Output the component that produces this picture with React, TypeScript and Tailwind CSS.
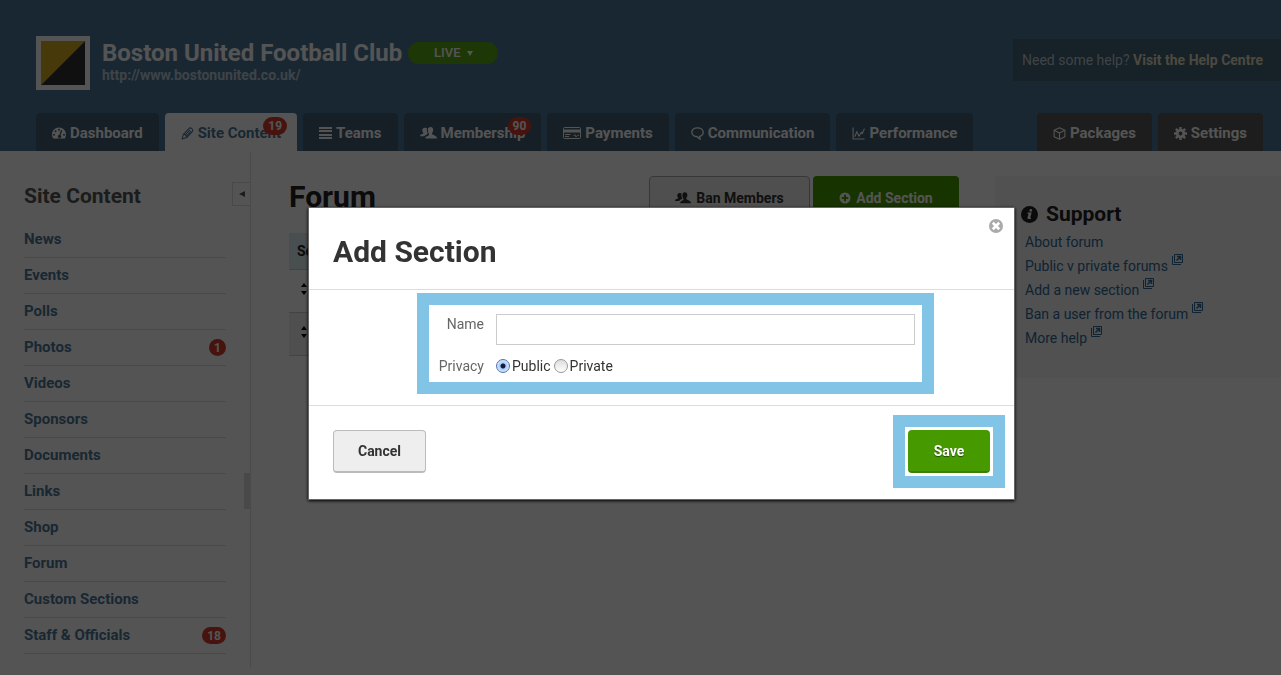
import React, { useState } from 'react';

interface IconProps {
  className?: string;
}

const DashboardIcon: React.FC<IconProps> = ({ className }) => (
  <svg viewBox="0 0 28 24" fill="currentColor" fillRule="evenodd" className={className}>
    <path d="M14 1C6.300 1 0 7.300 0 15c0 2.700.8 5.200 2.100 7.300.2.400.5.700 1 .7h21.800c.5 0 .8-.3 1-.7A13.700 13.700 0 0 0 28 15C28 7.300 21.700 1 14 1ZM4 17.500a2 2 0 1 1 0-4 2 2 0 0 1 0 4ZM7 10.500a2 2 0 1 1 0-4 2 2 0 0 1 0 4ZM14 7.500a2 2 0 1 1 0-4 2 2 0 0 1 0 4ZM24 17.500a2 2 0 1 1 0-4 2 2 0 0 1 0 4ZM19.400 6.300c.7.200 1.100.9.900 1.600l-3.100 8.300a3.300 3.300 0 1 1-2.300-.7l2.700-8.400c.2-.7 1.100-1 1.800-.8Z" />
  </svg>
);

const PencilIcon: React.FC<IconProps> = ({ className }) => (
  <svg viewBox="0 0 24 24" fill="none" stroke="currentColor" strokeWidth="2" strokeLinejoin="round" className={className}>
    <path d="M2 22 4.500 13.500 14 3.500a3.500 3.500 0 0 1 6.500 5.500L10.500 19.500 2 22Z" />
    <path d="m8 14.500 8.500-9M10.500 16.500l8.500-9M4.500 13.500c3 0 5.500 2.500 6 6" />
  </svg>
);

const ListIcon: React.FC<IconProps> = ({ className }) => (
  <svg viewBox="0 0 13 12" fill="currentColor" className={className}>
    <path d="M0 0h13v2H0zM0 3h13v2H0zM0 7h13v2H0zM0 10h13v2H0z" />
  </svg>
);

const UsersIcon: React.FC<IconProps> = ({ className }) => (
  <svg viewBox="0 0 34 24" fill="currentColor" className={className}>
    <path d="M21 0c3.600 0 5.300 2.600 5.300 5.800 0 2.700-.9 4.800-2.300 6.100-.5.600-.4 2 .3 2.500 2 1.600 8.300 3 9.200 6 .3 1 .4 2.100.4 2.800H11c0-2 .3-3.300 1.600-4 2-1.200 4.800-1.800 5.400-3.300.5-1 .2-2.300-.4-3.100a9 9 0 0 1-1.900-7C15.700 2.400 17.400 0 21 0Z" />
    <path d="M9.500 1.500c2-.3 3.500.1 4.500 1-.9 3.500-.4 7.500 1.600 10.500-.8 2-5.600 2.500-6.900 5.500H0c0-2 .8-3 2.300-3.600 1.700-.7 4-1 4.500-2.200.3-.7-.1-1.300-.6-1.900C3.300 7 4.500 2.200 9.500 1.500Z" />
  </svg>
);

const CardIcon: React.FC<IconProps> = ({ className }) => (
  <svg viewBox="0 0 36 24" className={className}>
    <rect x="1" y="1" width="34" height="22" rx="2" fill="none" stroke="currentColor" strokeWidth="2" />
    <path d="M1 5h34v6H1z" fill="currentColor" />
    <path d="M4 15h11M4 19h8M21 18c2-3 5-3 4 0s3 1 4-1 3 0 3 1" fill="none" stroke="currentColor" strokeWidth="2" />
  </svg>
);

const CommentIcon: React.FC<IconProps> = ({ className }) => (
  <svg viewBox="0 0 24 24" fill="none" stroke="currentColor" strokeWidth="2.500" strokeLinejoin="round" className={className}>
    <path d="M16 17.500c4-1.200 6.500-4.200 6.500-7.700C22.500 5 18 1.500 12 1.500S1.500 5 1.500 9.800c0 4.700 4.500 8.200 10.500 8.200 1 1.800 2.500 3.500 5 4.500-.8-1.500-1.200-3-1-5Z" />
  </svg>
);

const ChartIcon: React.FC<IconProps> = ({ className }) => (
  <svg viewBox="0 0 24 24" fill="none" stroke="currentColor" strokeWidth="2" className={className}>
    <path d="M2 1v21h21" />
    <path d="m5 18 4-9 4 8 4-7 2 2 4-9" />
  </svg>
);

const BoxIcon: React.FC<IconProps> = ({ className }) => (
  <svg viewBox="0 0 24 24" fill="none" stroke="currentColor" strokeWidth="2" strokeLinejoin="round" className={className}>
    <path d="m12 1.500 10 4.500v12l-10 4.500L2 18V6l10-4.500Z" />
    <path d="m2 6 10 5 10-5M12 11v11.500" />
  </svg>
);

const GearIcon: React.FC<IconProps> = ({ className }) => (
  <svg viewBox="0 0 24 24" className={className}>
    <circle cx="12" cy="12" r="6" fill="none" stroke="currentColor" strokeWidth="5" />
    <path
      d="M12 0v5M12 19v5M0 12h5M19 12h5M3.500 3.500 7 7M17 17l3.500 3.500M3.500 20.500 7 17M17 7l3.500-3.500"
      stroke="currentColor"
      strokeWidth="4.500"
    />
  </svg>
);

const PlusCircleIcon: React.FC<IconProps> = ({ className }) => (
  <svg viewBox="0 0 24 24" fill="currentColor" fillRule="evenodd" className={className}>
    <path d="M12 1a11 11 0 1 0 0 22 11 11 0 0 0 0-22ZM10 5.500h4V10h4.500v4H14v4.500h-4V14H5.500v-4H10V5.500Z" />
  </svg>
);

const CloseIcon: React.FC<IconProps> = ({ className }) => (
  <svg viewBox="0 0 24 24" className={className}>
    <circle cx="12" cy="12" r="12" fill="currentColor" />
    <path d="m6.500 6.500 11 11M17.500 6.500l-11 11" stroke="#fff" strokeWidth="4.500" />
  </svg>
);

const InfoIcon: React.FC<IconProps> = ({ className }) => (
  <svg viewBox="0 0 24 24" className={className}>
    <circle cx="12" cy="12" r="12" fill="currentColor" />
    <circle cx="13.800" cy="6.300" r="1.900" fill="#fff" />
    <path d="M9.300 10.300h4.500l-2 7.200h2.200" fill="none" stroke="#fff" strokeWidth="2" />
    <path d="m12.300 10-2.200 8" stroke="#fff" strokeWidth="2.500" />
  </svg>
);

const ExternalIcon: React.FC<IconProps> = ({ className }) => (
  <svg viewBox="0 0 11 11" fill="none" stroke="currentColor" className={className}>
    <path d="M2.500.5h8v8h-8zM.5 2v8.500H9" />
    <path d="m4.500 6.500 3.500-3.500M5 2.500h3.500V6" strokeWidth="1.500" />
  </svg>
);

const SortIcon: React.FC<IconProps> = ({ className }) => (
  <svg viewBox="0 0 6 12" fill="currentColor" className={className}>
    <path d="m3 0 3 4H0zM3 12 0 8h6z" />
  </svg>
);

interface Tab {
  label: string;
  icon: React.ReactNode;
  badge?: number;
}

const mainTabs: Tab[] = [
  { label: 'Dashboard', icon: <DashboardIcon className="w-[14px] h-3" /> },
  { label: 'Site Content', icon: <PencilIcon className="w-[13px] h-[13px]" />, badge: 19 },
  { label: 'Teams', icon: <ListIcon className="w-[13px] h-3" /> },
  { label: 'Membership', icon: <UsersIcon className="w-[17px] h-3" />, badge: 90 },
  { label: 'Payments', icon: <CardIcon className="w-[18px] h-3" /> },
  { label: 'Communication', icon: <CommentIcon className="w-[13px] h-[13px]" /> },
  { label: 'Performance', icon: <ChartIcon className="w-[13px] h-[13px]" /> },
];

const adminTabs: Tab[] = [
  { label: 'Packages', icon: <BoxIcon className="w-[13px] h-[13px]" /> },
  { label: 'Settings', icon: <GearIcon className="w-[13px] h-[13px]" /> },
];

const sections = [
  { label: 'News' },
  { label: 'Events' },
  { label: 'Polls' },
  { label: 'Photos', badge: 1 },
  { label: 'Videos' },
  { label: 'Sponsors' },
  { label: 'Documents' },
  { label: 'Links' },
  { label: 'Shop' },
  { label: 'Forum' },
  { label: 'Custom Sections' },
  { label: 'Staff & Officials', badge: 18 },
];

const supportLinks = [
  { label: 'About forum', external: false },
  { label: 'Public v private forums', external: true },
  { label: 'Add a new section', external: true },
  { label: 'Ban a user from the forum', external: true },
  { label: 'More help', external: true },
];

const Header = () => (
  <header className="bg-[#4e7899] text-white">
    <div className="flex items-start justify-between pl-9 pt-9 h-[113px]">
      <div className="flex items-start gap-3">
        <svg viewBox="0 0 54 54" className="w-[54px] h-[54px]">
          <path d="M0 0h54v54H0z" fill="#fff" />
          <path d="M5 5h44L5 49z" fill="#d9ae24" />
          <path d="M49 5v44H5z" fill="#333" />
        </svg>
        <div className="pt-[3px]">
          <div className="flex items-center gap-[6px] h-7">
            <h1 className="text-2xl leading-7 font-bold">Boston United Football Club</h1>
            <button className="flex items-center justify-center gap-[6px] w-[90px] h-[22px] rounded-full bg-[#5aa615] text-[13px] font-medium">
              LIVE
              <svg viewBox="0 0 6 5" fill="currentColor" className="w-[6px] h-[5px]">
                <path d="M0 0h6L3 5z" />
              </svg>
            </button>
          </div>
          <a href="#" className="block text-sm leading-4 font-bold text-[#bccbd7]">http://www.bostonunited.co.uk/</a>
        </div>
      </div>
      <p className="mt-[3px] h-[42px] pl-[9px] pr-[18px] leading-[42px] text-sm bg-[#456579] text-[#c0ccd4]">
        Need some help? <a href="#" className="font-bold text-[#e6dcc0]">Visit the Help Centre</a>
      </p>
    </div>
    <nav className="flex justify-between pl-9 pr-[18px]">
      <div className="flex gap-[6px]">
        {mainTabs.map((tab) => (
          <a
            key={tab.label}
            href="#"
            className={`relative flex items-center gap-1 h-[38px] px-4 pt-[2px] rounded-t-sm text-[15px] font-bold ${
              tab.label === 'Site Content' ? 'bg-white text-[#4e7899]' : 'bg-[#446075] text-white'
            }`}
          >
            {tab.icon}
            {tab.label}
            {tab.badge && (
              <span className="absolute top-1 right-[10px] px-[5px] h-[18px] leading-[18px] rounded-full bg-[#d83a30] text-white text-xs">
                {tab.badge}
              </span>
            )}
          </a>
        ))}
      </div>
      <div className="flex gap-[6px]">
        {adminTabs.map((tab) => (
          <a
            key={tab.label}
            href="#"
            className="flex items-center gap-1 h-[38px] px-4 pt-[2px] rounded-t-sm bg-[#585858] text-white text-[15px] font-bold"
          >
            {tab.icon}
            {tab.label}
          </a>
        ))}
      </div>
    </nav>
  </header>
);

const Sidebar = () => (
  <aside className="relative w-[251px] shrink-0 px-6 pt-7 pb-[14px] border-r border-[#e0e0e0]">
    <h2 className="text-[21px] leading-8 font-bold text-[#555]">Site Content</h2>
    <button className="absolute top-[30px] right-0 flex items-center justify-center w-[18px] h-6 border border-r-0 border-[#ddd] text-[#555]">
      <svg viewBox="0 0 6 6" fill="currentColor" className="w-[6px] h-[6px]">
        <path d="M6 0v6L0 3z" />
      </svg>
    </button>
    <ul className="mt-[10px]">
      {sections.map((item) => (
        <li key={item.label} className="flex items-center justify-between h-9 border-b border-[#ddd]">
          <a href="#" className="text-[15px] font-bold text-[#4e7899]">{item.label}</a>
          {item.badge && (
            <span className="flex items-center justify-center min-w-[17px] h-[17px] px-[5px] rounded-full bg-[#d83a30] text-white text-xs font-bold">
              {item.badge}
            </span>
          )}
        </li>
      ))}
    </ul>
    {/* scroll handle */}
    <div className="absolute top-[321px] right-0 w-[6px] h-9 bg-[#ddd]" />
  </aside>
);

const ForumPanel = () => (
  <main className="flex-1 pl-[38px] pt-6">
    <div className="flex items-start justify-between">
      <h2 className="text-[30px] leading-[42px] font-bold text-[#222]">Forum</h2>
      <div className="flex gap-[3px]">
        <button className="flex items-center justify-center gap-[5px] w-[161px] h-[43px] border border-[#aaa] rounded-sm bg-[#eee] text-sm font-bold text-[#333]">
          <UsersIcon className="w-4 h-3" />
          Ban Members
        </button>
        <button className="flex items-center justify-center gap-[5px] w-[146px] h-[43px] rounded-sm bg-[#469a00] text-sm font-bold text-white">
          <PlusCircleIcon className="w-3 h-3" />
          Add Section
        </button>
      </div>
    </div>
    <table className="w-full mt-[14px] text-left">
      <thead>
        <tr className="h-9 bg-[#dcebf5] border-b border-[#ccc]">
          <th className="pl-2 text-sm font-bold text-[#222]">Section</th>
        </tr>
      </thead>
      <tbody>
        <tr className="h-[43px] border-b border-[#ccc]">
          <td className="pl-3 pb-1"><SortIcon className="w-[6px] h-3" /></td>
        </tr>
        <tr className="h-[43px] border-b border-[#ccc] bg-[#f0f0f0]">
          <td className="pl-3 pb-1"><SortIcon className="w-[6px] h-3" /></td>
        </tr>
      </tbody>
    </table>
  </main>
);

const Support = () => (
  <aside className="w-[286px] h-[202px] shrink-0 ml-9 mt-6 pl-[26px] pt-[22px] bg-[#f4f4f4]">
    <h2 className="flex items-center gap-2 text-[21px] leading-8 font-bold text-[#222]">
      <InfoIcon className="w-[17px] h-[17px]" />
      Support
    </h2>
    <ul className="pl-1">
      {supportLinks.map((link) => (
        <li key={link.label} className="h-6 leading-6">
          <a href="#" className="flex items-start gap-1 text-sm leading-6 text-[#336b99]">
            {link.label}
            {link.external && <ExternalIcon className="w-[11px] h-[11px]" />}
          </a>
        </li>
      ))}
    </ul>
  </aside>
);

const radioClass =
  'appearance-none w-[14px] h-[14px] rounded-full border border-[#999] bg-gradient-to-b from-[#ddd] to-white checked:border-[#5573ad] checked:bg-[radial-gradient(circle,#111a3a_2px,#a8cdf8_3px,#cfe6ff_6px)]';

const AddSectionDialog: React.FC<{ onClose: () => void }> = ({ onClose }) => {
  const [name, setName] = useState('');
  const [privacy, setPrivacy] = useState('public');

  return (
    <div className="fixed inset-0 flex items-start justify-center pl-[42px] pt-[207px] bg-black/67">
      <div
        role="dialog"
        aria-labelledby="dialog-title"
        className="relative w-full max-w-[707px] border border-[#666] bg-white shadow-[0_1px_3px_#000]"
      >
        <button onClick={onClose} aria-label="Close" className="absolute top-[11px] right-[11px] text-[#aaa]">
          <CloseIcon className="w-[14px] h-[14px]" />
        </button>
        <h2 id="dialog-title" className="px-6 pt-[25px] pb-[18px] text-[30px] leading-[38px] font-bold text-[#333] border-b border-[#ddd]">
          Add Section
        </h2>
        <div className="pt-[3px] pb-[11px] pl-[108px] pr-20 border-b border-[#ddd]">
          <div className="h-[101px] border-12 border-[#82c4e6] px-[7px] pt-[9px] text-sm">
            <div className="flex items-start">
              <label htmlFor="section-name" className="w-12 mr-3 leading-5 text-right text-[#666]">Name</label>
              <input
                id="section-name"
                type="text"
                value={name}
                onChange={(e) => setName(e.target.value)}
                className="flex-1 h-[31px] px-2 border border-[#ccc] outline-none"
              />
            </div>
            <div role="radiogroup" aria-labelledby="privacy-label" className="flex items-center mt-[11px] leading-5 text-[#333]">
              <span id="privacy-label" className="w-12 mr-3 text-right text-[#666]">Privacy</span>
              <label className="flex items-center gap-[2px] mr-[3px]">
                <input
                  type="radio"
                  name="privacy"
                  checked={privacy === 'public'}
                  onChange={() => setPrivacy('public')}
                  className={radioClass}
                />
                Public
              </label>
              <label className="flex items-center gap-[2px]">
                <input
                  type="radio"
                  name="privacy"
                  checked={privacy === 'private'}
                  onChange={() => setPrivacy('private')}
                  className={radioClass}
                />
                Private
              </label>
            </div>
          </div>
        </div>
        <div className="flex items-center justify-between pt-[9px] pb-[11px] pl-6 pr-[9px]">
          <button
            onClick={onClose}
            className="w-[93px] h-[43px] rounded-sm border border-b-2 border-[#bbb] bg-[#eee] text-sm font-bold text-[#333]"
          >
            Cancel
          </button>
          <div className="border-12 border-[#82c4e6] p-[3px]">
            <button
              onClick={onClose}
              className="block w-[82px] h-[43px] rounded-sm border-b-2 border-[#3a7f00] bg-[#469a00] text-sm font-bold text-white text-shadow-[0_1px_1px_#0008]"
            >
              Save
            </button>
          </div>
        </div>
      </div>
    </div>
  );
};

export default function App() {
  const [open, setOpen] = useState(true);

  return (
    <div className="min-h-screen bg-white font-[Roboto,sans-serif]">
      <Header />
      <div className="flex items-start pt-px">
        <Sidebar />
        <ForumPanel />
        <Support />
      </div>
      {open && <AddSectionDialog onClose={() => setOpen(false)} />}
    </div>
  );
}
